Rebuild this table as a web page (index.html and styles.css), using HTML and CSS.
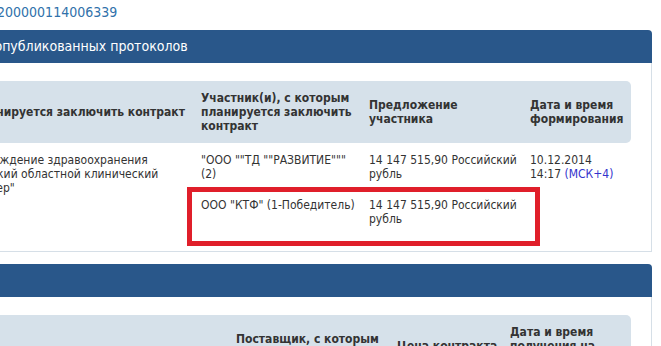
FILE: index.html
```html
<!DOCTYPE html>
<html lang="ru">
<head>
    <meta charset="UTF-8">
    <meta name="viewport" content="width=device-width, initial-scale=1.0">
    <title>Карточка закупки</title>
    <link rel="stylesheet" href="styles.css">
</head>
<body>
    <div class="page">
        <div class="reg-line">
            <a class="reg-link" href="#">0162200000114006339</a>
        </div>

        <section class="panel">
            <h2 class="panel-title">Список сформированных и опубликованных протоколов</h2>
            <div class="panel-body">
                <table class="grid">
                    <colgroup>
                        <col style="width: 362px">
                        <col style="width: 168px">
                        <col style="width: 161px">
                        <col style="width: 109px">
                    </colgroup>
                    <thead>
                        <tr>
                            <th>Заказчик, с которым планируется заключить контракт</th>
                            <th>Участник(и), с которым планируется заключить контракт</th>
                            <th>Предложение участника</th>
                            <th>Дата и время формирования</th>
                        </tr>
                    </thead>
                    <tbody>
                        <tr>
                            <td rowspan="2">Областное бюджетное учреждение здравоохранения Иркутской области "Иркутский областной клинический кардиологический диспансер"</td>
                            <td>"ООО ""ТД ""РАЗВИТИЕ""" (2)</td>
                            <td>14 147 515,90 Российский рубль</td>
                            <td>10.12.2014 14:17 <span class="tz">(МСК+4)</span></td>
                        </tr>
                        <tr>
                            <td>ООО "КТФ" (1-Победитель)</td>
                            <td>14 147 515,90 Российский рубль</td>
                            <td></td>
                        </tr>
                    </tbody>
                </table>
                <!-- рамка вокруг победителя -->
                <div class="winner-mark"></div>
            </div>
        </section>

        <section class="panel">
            <h2 class="panel-title">Контракты</h2>
            <div class="panel-body">
                <table class="grid">
                    <colgroup>
                        <col style="width: 397px">
                        <col style="width: 161px">
                        <col style="width: 113px">
                        <col style="width: 129px">
                    </colgroup>
                    <thead>
                        <tr>
                            <th>Номер контракта</th>
                            <th>Поставщик, с которым заключен контракт</th>
                            <th>Цена контракта</th>
                            <th>Дата и время получения на исполнение</th>
                        </tr>
                    </thead>
                    <tbody>
                        <tr>
                            <td>2482600321714000154</td>
                            <td>ООО "КТФ"</td>
                            <td>14 147 515,90 Российский рубль</td>
                            <td>19.12.2014 10:05 <span class="tz">(МСК+4)</span></td>
                        </tr>
                    </tbody>
                </table>
            </div>
        </section>
    </div>
</body>
</html>
```

FILE: styles.css
```css
* {
    box-sizing: border-box;
}

body {
    margin: 0;
    font-family: Tahoma, "DejaVu Sans Condensed", "DejaVu Sans", sans-serif;
    font-size: 12px;
    line-height: 14px;
    color: #333;
    background: #fff;
    overflow: hidden;
}

/* страница прокручена вправо, левая часть за краем окна */
.page {
    margin-left: -189px;
    width: 841px;
}

.reg-line {
    padding: 4px 0 10px 154px;
    font-size: 14px;
    line-height: 16px;
}

.reg-link {
    color: #3071aa;
    text-decoration: none;
}

.panel + .panel {
    margin-top: 12px;
}

.panel-title {
    margin: 0;
    height: 33px;
    line-height: 33px;
    font-size: 14px;
    font-weight: normal;
    color: #fff;
    background: #29578a;
    border-radius: 4px 4px 0 0;
    white-space: nowrap;
}

.panel-body {
    position: relative;
    padding: 18px 20px;
    border-right: 1px solid #d6dfe7;
    border-bottom: 1px solid #d6dfe7;
}

.grid {
    width: 100%;
    table-layout: fixed;
    border-collapse: separate;
    border-spacing: 0;
}

.grid th {
    padding: 10px 0 10px 8px;
    background: #d6e1ea;
    font-weight: bold;
    text-align: left;
    vertical-align: middle;
}

.grid thead th:first-child {
    border-radius: 5px 0 0 5px;
}

.grid thead th:last-child {
    border-radius: 0 5px 5px 0;
}

.grid td {
    padding: 10px 0 7px 8px;
    vertical-align: top;
}

.grid td:last-child {
    padding-right: 8px;
}

.tz {
    color: #3333cc;
}

.winner-mark {
    position: absolute;
    left: 376px;
    top: 124px;
    width: 353px;
    height: 59px;
    border: 5px solid #e01f2a;
}
```
